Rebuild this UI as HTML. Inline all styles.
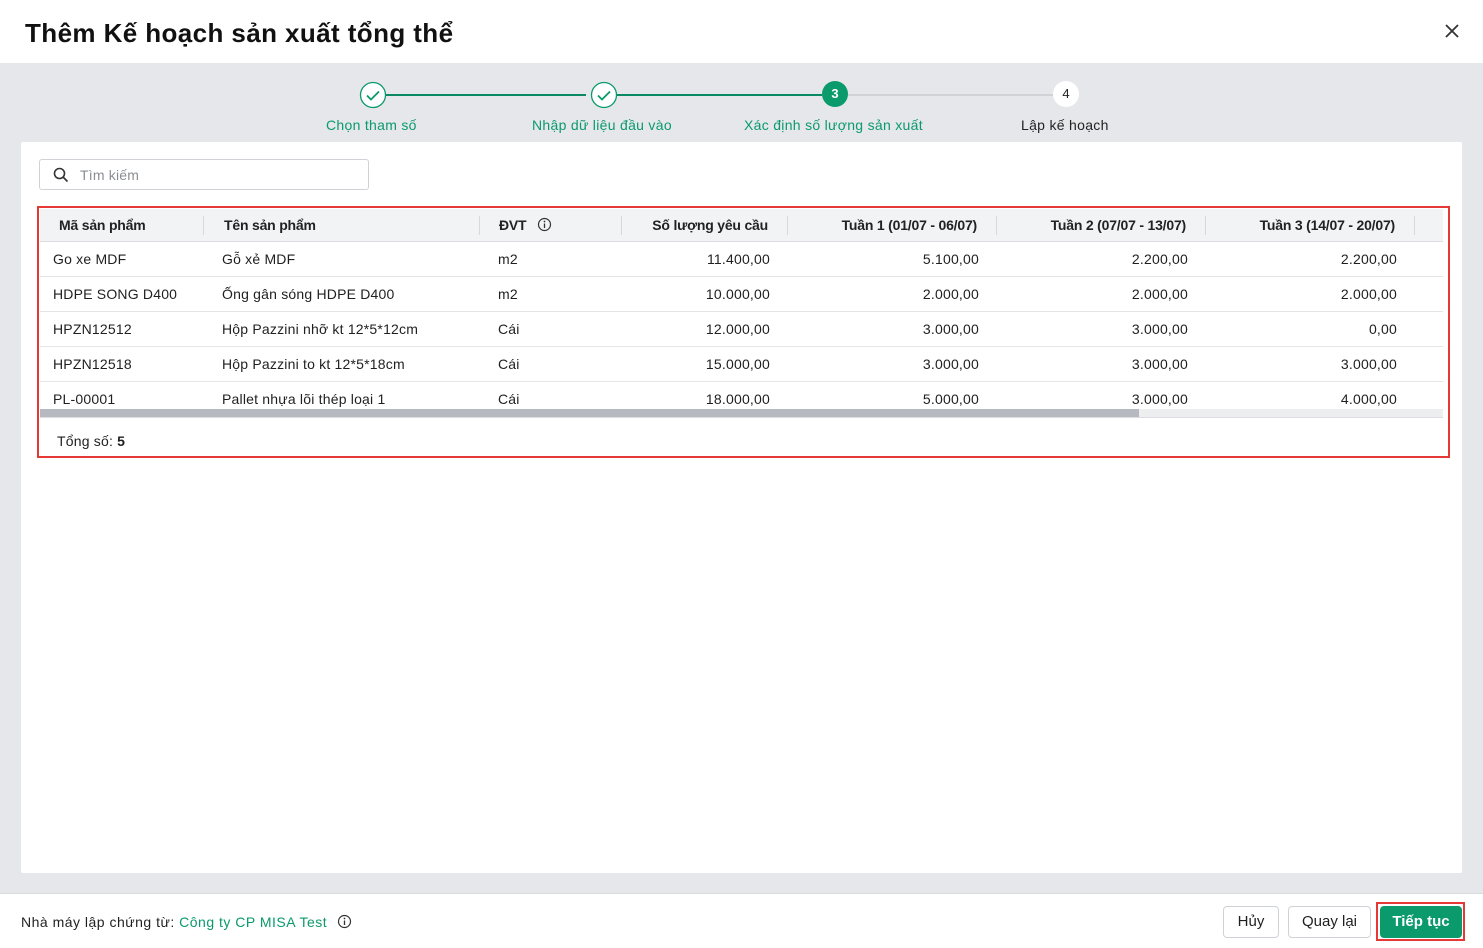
<!DOCTYPE html>
<html><head><meta charset="utf-8"><style>
*{box-sizing:border-box;margin:0;padding:0}
body{width:1483px;height:948px;position:relative;font-family:"Liberation Sans",sans-serif;background:#e6e7ea;color:#1f1f1f;overflow:hidden;font-size:14px}
.abs{position:absolute}
.hdr{left:0;top:0;width:1483px;height:63px;background:#fff}
.title{left:25px;top:18px;font-size:26px;font-weight:bold;color:#111;letter-spacing:0.4px}
.card{left:21px;top:142px;width:1441px;height:731px;background:#fff;border-radius:2px}
.foot{left:0;top:893px;width:1483px;height:55px;background:#fff;border-top:1px solid #d8dadd}
.step{font-size:14px;color:#0a9a6c;white-space:nowrap;letter-spacing:0.3px}
.line{height:2px}
.circ{width:26px;height:26px;border-radius:50%}
.search{left:39px;top:159px;width:330px;height:31px;border:1px solid #cfd2d6;border-radius:3px}
.redbox{left:37px;top:206px;width:1413px;height:252px;border:2px solid #e53935}
.th{top:209px;height:33px;background:#f2f3f5;left:40px;width:1403px;border-bottom:1px solid #dcdde0}
.t{position:absolute;font-size:14px;white-space:nowrap;letter-spacing:0.2px}
.hd{font-weight:bold;color:#222;top:217px;letter-spacing:-0.2px}
.sep{position:absolute;top:216px;width:1px;height:19px;background:#d6d8db}
.row{position:absolute;left:40px;width:1403px;border-bottom:1px solid #e4e5e7}
.btn{position:absolute;top:906px;height:32px;border:1px solid #cfd2d6;border-radius:4px;background:#fff;font-size:15px;text-align:center;line-height:30px}
</style></head><body>
<div class="abs hdr"></div>
<div class="abs title">Thêm Kế hoạch sản xuất tổng thể</div>
<svg class="abs" style="left:1444px;top:23px" width="16" height="16"><path d="M2 2L14 14M14 2L2 14" stroke="#333" stroke-width="1.8"/></svg>

<div class="abs line" style="left:386px;top:94px;width:200px;background:#0a8a64"></div>
<div class="abs line" style="left:617px;top:94px;width:205px;background:#0a8a64"></div>
<div class="abs line" style="left:848px;top:94px;width:205px;background:#d0d2d6"></div>
<svg class="abs" style="left:359px;top:81px" width="28" height="28"><circle cx="14" cy="14" r="12.5" fill="#fff" stroke="#0a9a6c" stroke-width="1.3"/><path d="M8 14.5l4 4 8-8" fill="none" stroke="#0a9a6c" stroke-width="1.8"/></svg>
<svg class="abs" style="left:590px;top:81px" width="28" height="28"><circle cx="14" cy="14" r="12.5" fill="#fff" stroke="#0a9a6c" stroke-width="1.3"/><path d="M8 14.5l4 4 8-8" fill="none" stroke="#0a9a6c" stroke-width="1.8"/></svg>
<div class="abs circ" style="left:822px;top:81px;background:#0a9a6c;color:#fff;font-size:13px;font-weight:bold;text-align:center;line-height:26px">3</div>
<div class="abs circ" style="left:1053px;top:81px;background:#fff;color:#222;font-size:13px;text-align:center;line-height:26px">4</div>
<div class="abs step" style="left:326px;top:117px">Chọn tham số</div>
<div class="abs step" style="left:532px;top:117px">Nhập dữ liệu đầu vào</div>
<div class="abs step" style="left:744px;top:117px">Xác định số lượng sản xuất</div>
<div class="abs step" style="left:1021px;top:117px;color:#222">Lập kế hoạch</div>

<div class="abs card"></div>
<div class="abs search"></div>
<svg class="abs" style="left:53px;top:167px" width="16" height="16"><circle cx="6.5" cy="6.5" r="5" fill="none" stroke="#333" stroke-width="1.6"/><path d="M10.5 10.5L14.5 14.5" stroke="#333" stroke-width="1.6"/></svg>
<div class="t" style="left:80px;top:167px;color:#8a8d92">Tìm kiếm</div>

<div class="abs redbox"></div>
<div class="abs th"></div>
<div class="t hd" style="left:59px">Mã sản phẩm</div>
<div class="t hd" style="left:224px">Tên sản phẩm</div>
<div class="t hd" style="left:499px">ĐVT</div>
<svg class="abs" style="left:537px;top:217px" width="15" height="15"><circle cx="7.5" cy="7.5" r="6" fill="none" stroke="#333" stroke-width="1.2"/><path d="M7.5 6.5v4.5" stroke="#333" stroke-width="1.3"/><circle cx="7.5" cy="4.5" r=".9" fill="#333"/></svg>
<div class="t hd" style="right:715px">Số lượng yêu cầu</div>
<div class="t hd" style="right:506px">Tuần 1 (01/07 - 06/07)</div>
<div class="t hd" style="right:297px">Tuần 2 (07/07 - 13/07)</div>
<div class="t hd" style="right:88px">Tuần 3 (14/07 - 20/07)</div>
<div class="sep" style="left:203px"></div><div class="sep" style="left:479px"></div><div class="sep" style="left:621px"></div><div class="sep" style="left:787px"></div><div class="sep" style="left:996px"></div><div class="sep" style="left:1205px"></div><div class="sep" style="left:1414px"></div>

<div class="row" style="top:242px;height:35px"></div>
<div class="row" style="top:277px;height:35px"></div>
<div class="row" style="top:312px;height:35px"></div>
<div class="row" style="top:347px;height:35px"></div>

<div class="t" style="left:53px;top:251px">Go xe MDF</div><div class="t" style="left:222px;top:251px">Gỗ xẻ MDF</div><div class="t" style="left:498px;top:251px">m2</div><div class="t" style="right:713px;top:251px">11.400,00</div><div class="t" style="right:504px;top:251px">5.100,00</div><div class="t" style="right:295px;top:251px">2.200,00</div><div class="t" style="right:86px;top:251px">2.200,00</div>
<div class="t" style="left:53px;top:286px">HDPE SONG D400</div><div class="t" style="left:222px;top:286px">Ống gân sóng HDPE D400</div><div class="t" style="left:498px;top:286px">m2</div><div class="t" style="right:713px;top:286px">10.000,00</div><div class="t" style="right:504px;top:286px">2.000,00</div><div class="t" style="right:295px;top:286px">2.000,00</div><div class="t" style="right:86px;top:286px">2.000,00</div>
<div class="t" style="left:53px;top:321px">HPZN12512</div><div class="t" style="left:222px;top:321px">Hộp Pazzini nhỡ kt 12*5*12cm</div><div class="t" style="left:498px;top:321px">Cái</div><div class="t" style="right:713px;top:321px">12.000,00</div><div class="t" style="right:504px;top:321px">3.000,00</div><div class="t" style="right:295px;top:321px">3.000,00</div><div class="t" style="right:86px;top:321px">0,00</div>
<div class="t" style="left:53px;top:356px">HPZN12518</div><div class="t" style="left:222px;top:356px">Hộp Pazzini to kt 12*5*18cm</div><div class="t" style="left:498px;top:356px">Cái</div><div class="t" style="right:713px;top:356px">15.000,00</div><div class="t" style="right:504px;top:356px">3.000,00</div><div class="t" style="right:295px;top:356px">3.000,00</div><div class="t" style="right:86px;top:356px">3.000,00</div>
<div class="t" style="left:53px;top:391px">PL-00001</div><div class="t" style="left:222px;top:391px">Pallet nhựa lõi thép loại 1</div><div class="t" style="left:498px;top:391px">Cái</div><div class="t" style="right:713px;top:391px">18.000,00</div><div class="t" style="right:504px;top:391px">5.000,00</div><div class="t" style="right:295px;top:391px">3.000,00</div><div class="t" style="right:86px;top:391px">4.000,00</div>
<div class="abs" style="left:40px;top:409px;width:1403px;height:9px;background:#eceef0;border-bottom:1px solid #dcdde0"></div>
<div class="abs" style="left:40px;top:409px;width:1099px;height:8px;background:#b6b9bf"></div>
<div class="t" style="left:57px;top:433px">Tổng số: <b>5</b></div>

<div class="abs foot"></div>
<div class="t" style="left:21px;top:914px;letter-spacing:0.5px">Nhà máy lập chứng từ: <span style="color:#0a9a6c">Công ty CP MISA Test</span></div>
<svg class="abs" style="left:337px;top:914px" width="15" height="15"><circle cx="7.5" cy="7.5" r="6" fill="none" stroke="#333" stroke-width="1.2"/><path d="M7.5 6.5v4.5" stroke="#333" stroke-width="1.3"/><circle cx="7.5" cy="4.5" r=".9" fill="#333"/></svg>
<div class="btn" style="left:1223px;width:56px">Hủy</div>
<div class="btn" style="left:1288px;width:83px">Quay lại</div>
<div class="abs" style="left:1376px;top:902px;width:89px;height:39px;border:2px solid #e53935"></div>
<div class="btn" style="left:1380px;width:82px;background:#0a9a6c;border-color:#0a9a6c;color:#fff;font-weight:bold">Tiếp tục</div>
</body></html>
